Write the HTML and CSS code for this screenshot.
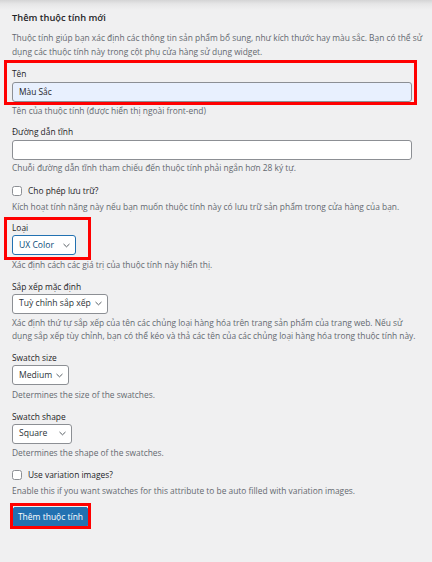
FILE: index.html
```html
<!DOCTYPE html>
<html lang="vi">
<head>
<meta charset="utf-8">
<title>Thêm thuộc tính mới</title>
<link rel="stylesheet" href="styles.css">
</head>
<body>
<div class="page">
  <div class="form-wrap">
    <h2 class="title">Thêm thuộc tính mới</h2>
    <p class="intro">Thuộc tính giúp bạn xác định các thông tin sản phẩm bổ sung, như kích thước hay màu sắc. Bạn có thể sử<br>dụng các thuộc tính này trong cột phụ cửa hàng sử dụng widget.</p>

    <div class="field field-first">
      <label class="label">Tên</label>
      <div class="input autofill">Màu Sắc</div>
      <p class="desc">Tên của thuộc tính (được hiển thị ngoài front-end)</p>
    </div>

    <div class="field">
      <label class="label">Đường dẫn tĩnh</label>
      <div class="input"></div>
      <p class="desc">Chuỗi đường dẫn tĩnh tham chiếu đến thuộc tính phải ngắn hơn 28 ký tự.</p>
    </div>

    <div class="field field-check">
      <label class="check-row"><span class="checkbox"></span><span>Cho phép lưu trữ?</span></label>
      <p class="desc desc-check">Kích hoạt tính năng này nếu bạn muốn thuộc tính này có lưu trữ sản phẩm trong cửa hàng của bạn.</p>
    </div>

    <div class="field">
      <label class="label">Loại</label>
      <div class="select focused w-type"><span>UX Color</span><svg class="chev" viewBox="0 0 8 5"><path d="M0.6 0.8 L4 4 L7.4 0.8"/></svg></div>
      <p class="desc desc-select">Xác định cách các giá trị của thuộc tính này hiển thị.</p>
    </div>

    <div class="field field-after-select">
      <label class="label">Sắp xếp mặc định</label>
      <div class="select w-order"><span>Tuỳ chỉnh sắp xếp</span><svg class="chev" viewBox="0 0 8 5"><path d="M0.6 0.8 L4 4 L7.4 0.8"/></svg></div>
      <p class="desc desc-select">Xác định thứ tự sắp xếp của tên các chủng loại hàng hóa trên trang sản phẩm của trang web. Nếu sử<br>dụng sắp xếp tùy chỉnh, bạn có thể kéo và thả các tên của các chủng loại hàng hóa trong thuộc tính này.</p>
    </div>

    <div class="field field-after-select">
      <label class="label">Swatch size</label>
      <div class="select w-size"><span>Medium</span><svg class="chev" viewBox="0 0 8 5"><path d="M0.6 0.8 L4 4 L7.4 0.8"/></svg></div>
      <p class="desc desc-select">Determines the size of the swatches.</p>
    </div>

    <div class="field field-after-select">
      <label class="label">Swatch shape</label>
      <div class="select w-shape"><span>Square</span><svg class="chev" viewBox="0 0 8 5"><path d="M0.6 0.8 L4 4 L7.4 0.8"/></svg></div>
      <p class="desc desc-select">Determines the shape of the swatches.</p>
    </div>

    <div class="field field-after-select">
      <label class="check-row"><span class="checkbox"></span><span>Use variation images?</span></label>
      <p class="desc desc-check">Enable this if you want swatches for this attribute to be auto filled with variation images.</p>
    </div>

    <div class="submit">
      <button class="button-primary">Thêm thuộc tính</button>
    </div>
  </div>

  <div class="mark mark-name"></div>
  <div class="mark mark-type"></div>
  <div class="mark mark-submit"></div>
</div>
</body>
</html>
```

FILE: styles.css
```css
* { box-sizing: border-box; }
html, body {
  margin: 0;
  padding: 0;
  background: #f0f0f1;
}
body {
  font-family: "Open Sans", "Noto Sans", "Liberation Sans", sans-serif;
  font-size: 8.4px;
  line-height: 13px;
  color: #1d2327;
}
.page {
  position: relative;
  width: 432px;
  height: 562px;
  overflow: hidden;
  background: linear-gradient(to bottom, #d4d4d5 0px, #e6e6e7 4px, #f0f0f1 10px);
}
.form-wrap {
  padding: 11px 12px 0 12px;
}
.title {
  margin: 0;
  font-size: 9.3px;
  line-height: 14px;
  font-weight: 600;
  color: #1d2327;
}
.intro {
  margin: 6px 0 0 0;
  color: #646970;
  white-space: nowrap;
  line-height: 13.5px;
}
.field {
  margin-top: 8px;
}
.field-first { margin-top: 9px; }
.field-check { margin-top: 10px; }
.field-after-select { margin-top: 9px; }
.label {
  display: block;
  color: #1d2327;
}
.input {
  margin-top: 2px;
  width: 400px;
  height: 20px;
  border: 1px solid #8c8f94;
  border-radius: 3px;
  background: #fff;
  padding: 0 6px;
  line-height: 18px;
  color: #1d2327;
}
.input.autofill {
  background: #e8f0fe;
}
.desc {
  margin: 1.5px 0 0 0;
  color: #646970;
  white-space: nowrap;
}
.desc-check { margin-top: 3px; }
.desc-select { margin-top: 2.5px; }
.check-row {
  display: flex;
  align-items: center;
  gap: 6px;
  height: 13px;
  color: #1d2327;
}
.checkbox {
  width: 10px;
  height: 10px;
  border: 1px solid #8c8f94;
  border-radius: 2.5px;
  background: #fff;
  flex: none;
}
.select {
  margin-top: 1px;
  height: 20px;
  border: 1px solid #8c8f94;
  border-radius: 3px;
  background: #fff;
  padding: 0 5px 0 6px;
  display: flex;
  align-items: center;
  justify-content: space-between;
  color: #2c3338;
  font-size: 8.6px;
}
.select.focused {
  border-color: #2271b1;
  color: #0a4b78;
}
.chev {
  width: 7px;
  height: 5px;
  fill: none;
  stroke: #50575e;
  stroke-width: 1.1;
}
.w-type { width: 64px; }
.w-order { width: 96px; }
.w-size { width: 57px; }
.w-shape { width: 60px; }
.submit {
  margin-top: 10px;
  padding-left: 1px;
}
.button-primary {
  display: block;
  font-family: inherit;
  font-size: 8.5px;
  line-height: 18px;
  width: 75px;
  height: 20px;
  padding: 0;
  text-align: center;
  border: 1px solid #2271b1;
  border-radius: 2px;
  background: #2271b1;
  color: #fff;
  font-weight: 500;
}
.mark {
  position: absolute;
  border: 3px solid #ff0000;
}
.mark-name { left: 4px; top: 60px; width: 413px; height: 45px; }
.mark-type { left: 4px; top: 217px; width: 87px; height: 43px; }
.mark-submit { left: 10px; top: 503px; width: 81px; height: 26px; }
```
